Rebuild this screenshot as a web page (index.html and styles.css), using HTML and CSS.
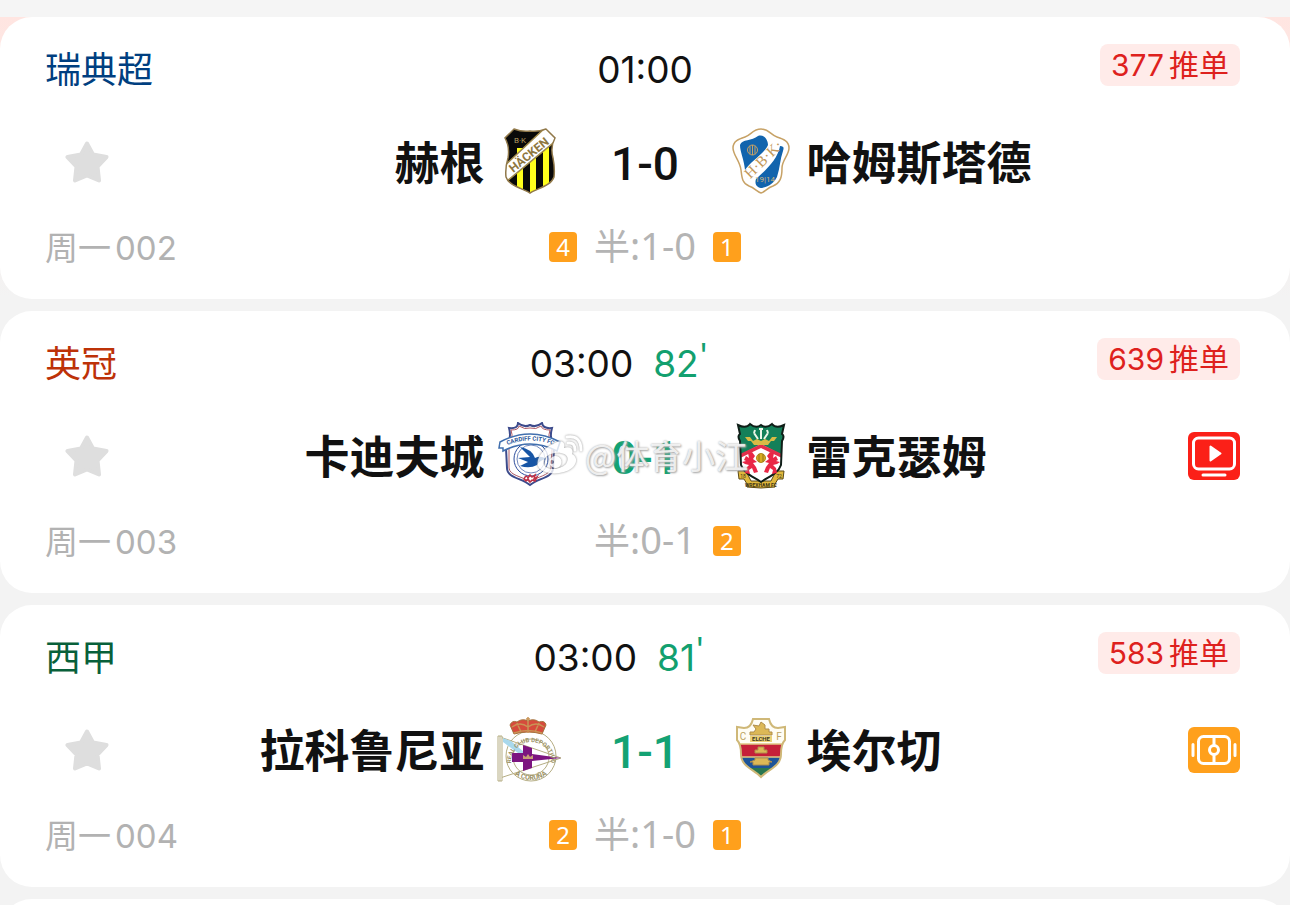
FILE: index.html
```html
<!DOCTYPE html>
<html lang="zh-CN">
<head>
<meta charset="utf-8">
<meta name="viewport" content="width=device-width, initial-scale=1">
<title>比分</title>
<link rel="stylesheet" href="styles.css">
</head>
<body>
<svg class="defs" aria-hidden="true">
  <symbol id="star" viewBox="0 0 44 42"><path d="M22 2.500 L28 13.500 L41.500 16 L32.500 25.500 L34 39.500 L22 34.500 L10 39.500 L11.500 25.500 L2.500 16 L16 13.500 Z" fill="#dedede" stroke="#dedede" stroke-width="4" stroke-linejoin="round"/></symbol>
</svg>
<main class="matches">
  <article class="card">
    <header class="row row-head">
      <div class="left league league-blue">瑞典超</div>
      <div class="time"><time>01:00</time></div>
      <div class="right"><a class="tips" href="#tips"><span>377</span><span>推单</span></a></div>
    </header>
    <div class="row row-main">
      <div class="left home">
        <button class="fav" type="button" aria-label="收藏"><svg class="star"><use href="#star"/></svg></button>
        <h2 class="team">赫根</h2>
        <svg class="crest" viewBox="0 0 68 68" aria-hidden="true">
          <defs><clipPath id="hk"><path d="M18 1 Q26 4 34 3 Q42 4 50 1 L59 10 Q54 19 57 30 Q59 40 58 49 C55 58 42 60 34 65 C26 60 13 58 10 49 Q9 40 12 30 Q14 19 9 10Z"/></clipPath></defs>
          <g clip-path="url(#hk)"><path fill="#090909" d="M0 0h68v68H0z"/><path fill="#ffff1c" d="M21 20h6v48h-6zM34 20h6v48h-6zM47 10h6v58h-6z"/><path d="M50 -1 62 11 11 53 5 41Z" fill="#fff" stroke="#a18a4c" stroke-width="1.500"/></g>
          <path d="M18 1 Q26 4 34 3 Q42 4 50 1 L59 10 Q54 19 57 30 Q59 40 58 49 C55 58 42 60 34 65 C26 60 13 58 10 49 Q9 40 12 30 Q14 19 9 10Z" fill="none" stroke="#91794a" stroke-width="1.500"/>
          <text class="crest-text" x="24" y="15" font-size="8" fill="#b49b60">B·K</text>
          <text class="crest-text crest-bold" transform="translate(33 27) rotate(-39)" x="0" y="4" font-size="12" fill="#8f7740">HÄCKEN</text>
        </svg>
      </div>
      <div class="score">1-0</div>
      <div class="right away">
        <svg class="crest" viewBox="0 0 68 68" aria-hidden="true">
          <path d="M34 1 C42 1 44 7 50 9 C56 11 62 13 62 20 C62 27 55 32 55 40 C55 50 53 55 46 58 C40 60 38 64 34 65 C30 64 28 60 22 58 C15 55 15 50 14 42 C13 33 6 27 6 20 C6 13 12 11 18 9 C24 7 26 1 34 1Z" fill="#fff" stroke="#c7a266" stroke-width="1.500"/>
          <path d="M13 17 C15 11 25 13 31 8 C37 6 41 12 41 17 C38 25 24 33 18 42 C17 31 13 24 13 17ZM53 18 C57 18 57 20 56 23 C53 31 53 40 50 49 C46 57 39 59 35 60 C31 60 27 57 29 51 C39 42 51 31 53 18Z" fill="#1264ad"/>
          <g fill="none" stroke="#c7a266"><circle cx="25.500" cy="22" r="5"/><path d="M25.500 17v10M23 18v8M28 18v8"/></g>
          <text class="crest-serif" transform="translate(37 32) rotate(-45)" x="0" y="4" font-size="15" fill="#c2995c">H·B·K·</text>
          <text class="crest-text" x="38" y="54" font-size="8" fill="#d5b77d">19|14</text>
        </svg>
        <h2 class="team">哈姆斯塔德</h2>
      </div>
    </div>
    <footer class="row row-foot">
      <div class="left round"><span>周一</span><span>002</span></div>
      <div class="half"><span class="corner">4</span><span class="half-score"><span class="half-label">半</span>:1-0</span><span class="corner">1</span></div>
    </footer>
  </article>

  <article class="card">
    <header class="row row-head">
      <div class="left league league-red">英冠</div>
      <div class="time time-live"><time>03:00</time><span class="minute">82<sup>'</sup></span></div>
      <div class="right"><a class="tips" href="#tips"><span>639</span><span>推单</span></a></div>
    </header>
    <div class="row row-main">
      <div class="left home">
        <button class="fav" type="button" aria-label="收藏"><svg class="star"><use href="#star"/></svg></button>
        <h2 class="team">卡迪夫城</h2>
        <svg class="crest" viewBox="0 0 68 68" aria-hidden="true">
          <path d="M13 6 Q22 7 22 1 Q28 6 34 3 Q40 6 46 1 Q47 7 56 6 Q53 16 58 26 L57 46 C57 56 42 56 34 63 C26 56 11 56 11 46 L10 26 Q16 16 13 6Z" fill="#fff" stroke="#3d4b8c" stroke-width="2"/>
          <path d="M15 8 Q23 8 23 4 Q29 8 34 6 Q40 8 45 4 Q46 8 54 8 Q51 17 56 27 L55 46 C53 54 42 54 34 60 C26 54 14 54 13 46 L13 27 Q18 17 15 8Z" fill="none" stroke="#ad5965" stroke-width="1"/>
          <circle cx="35" cy="37" r="17" fill="#fff" stroke="#2a4b9b" stroke-width="1"/><circle cx="35" cy="37" r="14" fill="none" stroke="#7188bd"/>
          <path d="M4 20 Q34 4 64 20 L61 29 Q34 15 7 29 L7 26 L3 26Z" fill="#fff" stroke="#416fae" stroke-width="1.500"/>
          <path id="city" d="M7 25 Q34 12 62 25" fill="none"/>
          <text class="crest-text crest-bold" font-size="6" fill="#2d579a"><textPath href="#city" startOffset="50%">CARDIFF CITY FC</textPath></text>
          <path d="M24 25 Q36 27 39 36 Q45 33 50 37 Q44 38 41 43 Q34 47 24 44 L32 40 L22 36 L34 35Z" fill="#1755a5"/>
          <path d="M28 57q2-5 4-1l2-3 2 2 3-2-1 4 3-2-2 4-3-1-2 2-2-3-2 2Z" fill="none" stroke="#c03045" stroke-width="1.500"/>
        </svg>
      </div>
      <div class="score score-live">0-1</div>
      <div class="right away">
        <svg class="crest" viewBox="0 0 68 68" aria-hidden="true">
          <defs><clipPath id="wx"><path d="M11 3 Q19 7 23 2 Q29 7 34 3 Q39 7 45 2 Q49 7 57 3 L55 12 Q58 14 55 19 L54 43 C51 52 41 55 34 60 C27 55 17 52 14 43 L13 19 Q10 14 13 12Z"/></clipPath></defs>
          <path d="M11 49h8l5 10h20l5-10h8l-1 8h-5l-3 5v3q-14 2-28 0v-3l-3-5h-5Z" fill="#e0b83c" stroke="#5c4a16"/>
          <g clip-path="url(#wx)"><path fill="#148059" d="M0 0h68v68H0z"/><path d="M11 34 34 22 57 34V60H11Z" fill="#fff"/><path d="M11 33 34 22 57 33V37L34 26 11 37Z" fill="#e22f4b"/></g>
          <path d="M11 3 Q19 7 23 2 Q29 7 34 3 Q39 7 45 2 Q49 7 57 3 L55 12 Q58 14 55 19 L54 43 C51 52 41 55 34 60 C27 55 17 52 14 43 L13 19 Q10 14 13 12Z" fill="none" stroke="#101e18" stroke-width="2"/>
          <path d="M34 17V7M32 7h4M31 17 27 11M27 11l1-3M37 17 41 11M41 11l-1-3" fill="none" stroke="#eef6e9" stroke-width="2"/>
          <path d="M18 15h5l3 4 4-2 4 2 4-2 4 2 3-4h5l-3 4h-3l-3 4H27l-3-4h-3Z" fill="#d8bb45"/>
          <path d="M17 38l2-4 3 2-1-5 4-1 3 4-2 3 4 3-4 1 3 4 2 5-4 1-2-5-3 2 1 4-5-1 1-5 3-3-4-1-3-2 4-1ZM51 38l-2-4-3 2 1-5-4-1-3 4 2 3-4 3 4 1-3 4-2 5 4 1 2-5 3 2-1 4 5-1-1-5-3-3 4-1 3-2-4-1Z" fill="#e92746"/>
          <circle cx="34" cy="36" r="4.500" fill="#d8ab20" stroke="#b08c1e"/><path d="M32 32v8M36 32v8" stroke="#92731a"/>
          <text class="crest-text crest-bold" x="34" y="65" font-size="5" fill="#3d3417">WREXHAM FC</text>
          <text class="crest-text" x="16" y="56" font-size="5" fill="#3d3417">18</text><text class="crest-text" x="52" y="56" font-size="5" fill="#3d3417">72</text>
        </svg>
        <h2 class="team">雷克瑟姆</h2>
        <button class="action" type="button" aria-label="视频直播"><svg viewBox="0 0 52 48"><rect width="52" height="48" rx="6" fill="#fb2018"/><rect x="5.500" y="6" width="41" height="31" rx="5" fill="none" stroke="#fff" stroke-width="3"/><path d="M22.500 14.500v14l10-7Z" fill="#fff" stroke="#fff" stroke-width="2" stroke-linejoin="round"/><path d="M15 43h22" stroke="#fff" stroke-width="3" stroke-linecap="round"/></svg></button>
      </div>
    </div>
    <footer class="row row-foot">
      <div class="left round"><span>周一</span><span>003</span></div>
      <div class="half"><span></span><span class="half-score"><span class="half-label">半</span>:0-1</span><span class="corner">2</span></div>
    </footer>
    <div class="watermark">
      <svg class="weibo" viewBox="0 0 48 42" aria-hidden="true"><path fill-rule="evenodd" d="M20 9 C26 5 31 8 29 14 C35 12 39 15 37 20 C43 23 42 30 37 34 C27 42 7 41 3 32 C0 24 11 12 20 9ZM20 19 C11 20 7 26 9 31 C12 37 25 36 31 30 C36 22 29 18 20 19ZM20 22 A6 6 0 1 0 21 34 A6 6 0 1 0 20 22ZM17 26a2 2 0 1 1 0 4 2 2 0 0 1 0-4Z"/><path class="wave" d="M33 9q7-1 7 7M32 3q14-2 14 13"/></svg>
      <span>@体育小江</span>
    </div>
  </article>

  <article class="card">
    <header class="row row-head">
      <div class="left league league-green">西甲</div>
      <div class="time time-live"><time>03:00</time><span class="minute">81<sup>'</sup></span></div>
      <div class="right"><a class="tips" href="#tips"><span>583</span><span>推单</span></a></div>
    </header>
    <div class="row row-main">
      <div class="left home">
        <button class="fav" type="button" aria-label="收藏"><svg class="star"><use href="#star"/></svg></button>
        <h2 class="team">拉科鲁尼亚</h2>
        <svg class="crest" viewBox="0 0 68 68" aria-hidden="true">
          <g fill="#fff" stroke="#b5ad83"><circle cx="35" cy="40" r="25"/><circle cx="35" cy="41" r="18"/><path d="M4 21 65 42 4 62Z" fill="none"/><path d="M4 20v45M2 20h4v45H2Z"/></g>
          <path d="M7 22 15 25 28 36V41L22 37 7 26Z" fill="#a9d8ec"/>
          <path d="M16 37H27V29L36 32V38L65 42 36 45V52L27 55V46H16Z" fill="#7c1580"/>
          <path d="M27 43v-4l3 2 2-3 2 3 3-2v4Z" fill="#c79e75"/>
          <path id="depTop" d="M15 46 A20 20 0 1 1 55 46" fill="none"/>
          <text class="crest-text crest-bold" font-size="6" fill="#9c9367"><textPath href="#depTop" startOffset="50%">REAL CLUB DEPORTIVO</textPath></text>
          <path id="depLow" d="M12 44 A23 20 0 0 0 58 44" fill="none"/>
          <text class="crest-text crest-bold" font-size="7" fill="#9c9367"><textPath href="#depLow" startOffset="50%">A CORUÑA</textPath></text>
          <path d="M18 18 L14 9 Q16 4 21 6 Q26 2 32 5 Q38 2 43 6 Q49 4 50 9 L46 18 Q32 14 18 18Z" fill="#d64b3c" stroke="#a3733d"/>
          <path d="M32 1v16M30 3h4M18 17q14-5 28 0M21 7l4 9M43 7l-4 9M16 11q8-6 16 0q8-6 16 0" fill="none" stroke="#c99455" stroke-width="1.500"/>
        </svg>
      </div>
      <div class="score score-live">1-1</div>
      <div class="right away">
        <svg class="crest" viewBox="0 0 68 68" aria-hidden="true">
          <defs><clipPath id="el"><path d="M26 3H42Q44 12 51 12L58 11V24Q54 28 54 38C54 51 41 53 34 61C27 53 14 51 14 38Q14 28 10 24V11L17 12Q24 12 26 3Z"/></clipPath></defs>
          <g clip-path="url(#el)"><path fill="#fffdf4" d="M0 0h68v28H0z"/><path fill="#c52039" d="M0 28h68v13H0z"/><path fill="#1d5498" d="M0 41h68v12H0z"/><path fill="#297750" d="M0 52h68v16H0z"/><path d="M0 28h68M0 41h68" stroke="#e0c882" stroke-width="1.500"/></g>
          <path d="M26 3H42Q44 12 51 12L58 11V24Q54 28 54 38C54 51 41 53 34 61C27 53 14 51 14 38Q14 28 10 24V11L17 12Q24 12 26 3Z" fill="none" stroke="#cfb878" stroke-width="2"/>
          <path d="M23 19h22v-3h-3v-3h-4V9l-4-3-2 4-6-1 3 4-2 3h-4ZM28 37h12v-3h-3v-3h-6v3h-3ZM26 49h16v-3h3l-4-2v-2H28v2l-5 2h3Z" fill="#dcb856" stroke="#b08e4a"/>
          <path fill="#ecd379" d="M23 20h22v6H23z"/><text class="crest-text crest-bold" x="34" y="25" font-size="6" fill="#413820">ELCHE</text>
          <text class="crest-text" x="16" y="24" font-size="10" fill="#bca461">C</text><text class="crest-text" x="52" y="24" font-size="10" fill="#bca461">F</text>
        </svg>
        <h2 class="team">埃尔切</h2>
        <button class="action" type="button" aria-label="阵容"><svg viewBox="0 0 52 48"><rect y="1" width="52" height="46" rx="6" fill="#ffa01c"/><g fill="none" stroke="#fff" stroke-width="3"><rect x="10.500" y="10.500" width="31" height="27" rx="5"/><path d="M26 10v9M26 29v9"/><circle cx="26" cy="24" r="4.500"/><path d="M5 18.500v11M47 18.500v11" stroke-linecap="round"/></g></svg></button>
      </div>
    </div>
    <footer class="row row-foot">
      <div class="left round"><span>周一</span><span>004</span></div>
      <div class="half"><span class="corner">2</span><span class="half-score"><span class="half-label">半</span>:1-0</span><span class="corner">1</span></div>
    </footer>
  </article>

  <article class="card card-next"></article>
</main>
</body>
</html>
```

FILE: styles.css
```css
* { box-sizing: border-box; }

body {
  margin: 0;
  height: 100vh;
  overflow: hidden;
  background: #f3f3f3;
  color: #111;
  font-family: Inter, "Noto Sans CJK SC", sans-serif;
}

button {
  padding: 0;
  border: 0;
  background: none;
  cursor: pointer;
}

.defs {
  display: none;
}

.matches {
  display: flex;
  flex-direction: column;
  gap: 12px;
  height: 100%;
  overflow: hidden;
  border-top: 17px solid #f5f5f5;
  background: linear-gradient(#ffe5e1, #f3f3f3 280px);
}

.card {
  position: relative;
  flex: none;
  padding: 27px 0 32px;
  border-radius: 32px;
  background: #fff;
}

.card-next { min-height: 80px; }

.row {
  display: grid;
  grid-template-columns: minmax(0, 1fr) auto minmax(0, 1fr);
  align-items: center;
}

.row-head { height: 50px; }

.row-main {
  grid-template-columns: minmax(0, 1fr) 163px minmax(0, 1fr);
  margin: 34px 0 29px;
}

.row-foot { height: 42px; }

.left { padding-left: 45px; }

.right {
  display: flex;
  padding-right: 50px;
}

.league {
  font-size: 36px;
  line-height: 52px;
}

.league-blue { color: #003f80; }
.league-red { color: #bd3208; }
.league-green { color: #08603a; }

.time {
  display: flex;
  gap: 20px;
  font-size: 37px;
  line-height: 50px;
}

.time-live { padding-right: 52px; }

.minute { color: #12a06f; }

.minute sup {
  font-size: 32px;
  line-height: 0;
  vertical-align: 10px;
}

.row-head .right {
  align-self: start;
  justify-content: flex-end;
}

.tips {
  display: flex;
  gap: 5px;
  padding: 1px 11px;
  border-radius: 8px;
  background: #ffebe9;
  color: #de211d;
  font-size: 30px;
  line-height: 40px;
  text-decoration: none;
}

.home,
.away {
  display: flex;
  align-items: center;
  gap: 12px;
}

.home { gap: 11px; }

.fav {
  width: 84px;
  height: 68px;
  margin-right: auto;
}

.star {
  width: 44px;
  height: 42px;
  vertical-align: middle;
}

.team {
  margin: 0;
  padding-top: 3px;
  font-size: 45px;
  font-weight: 700;
  line-height: 65px;
  white-space: nowrap;
}

.crest {
  flex: none;
  width: 68px;
  height: 68px;
}

.crest-text,
.crest-serif {
  font-family: Roboto, sans-serif;
  text-anchor: middle;
}

.crest-serif { font-family: "Liberation Serif", serif; }
.crest-bold { font-weight: 700; }

.score {
  padding-top: 4px;
  font-family: Roboto, sans-serif;
  font-size: 46px;
  font-weight: 500;
  line-height: 64px;
  text-align: center;
}

.score-live { color: #14a273; }

.action {
  width: 52px;
  height: 48px;
  margin-left: auto;
}

.action svg {
  display: block;
  width: 52px;
  height: 48px;
}

.round {
  display: flex;
  gap: 4px;
  padding-top: 2px;
  color: #b2b2b2;
  font-size: 33px;
  line-height: 42px;
}

.half {
  display: grid;
  grid-template-columns: 28px auto 28px;
  align-items: center;
  gap: 17px;
  color: #b4b4b4;
}

.half-score {
  font-family: "Noto Sans", "Noto Sans CJK SC", sans-serif;
  font-size: 38px;
  line-height: 38px;
  padding-bottom: 2px;
}

.half-label { font-size: 36px; }

.corner {
  border-radius: 4px;
  background: #ffa01c;
  color: #fff;
  font-family: "Noto Sans", sans-serif;
  font-size: 24px;
  line-height: 30px;
  text-align: center;
}

.watermark {
  position: absolute;
  top: 116px;
  left: calc(50% - 110px);
  display: flex;
  align-items: center;
  gap: 2px;
  color: rgb(255 255 255 / 80%);
  font-family: "Noto Sans CJK SC", sans-serif;
  font-size: 33px;
  line-height: 56px;
  text-shadow: 0 0 2px #aaa, 1px 1px 2px #aaa;
  pointer-events: none;
}

.weibo {
  width: 48px;
  height: 42px;
  fill: #fff;
  opacity: 0.8;
  filter: drop-shadow(0 0 1px #777);
}

.weibo .wave {
  fill: none;
  stroke: #fff;
  stroke-width: 3;
  stroke-linecap: round;
}
```
